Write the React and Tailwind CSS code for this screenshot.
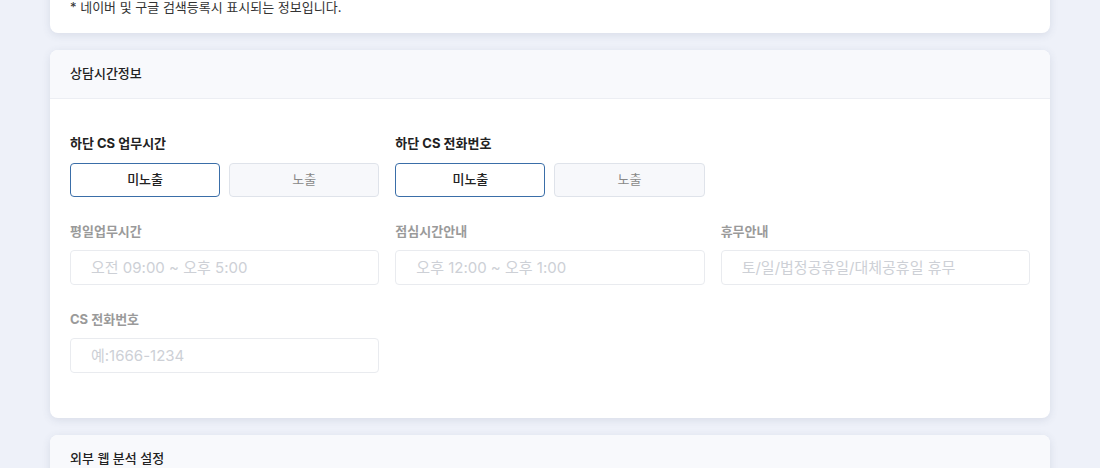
const font = { fontFamily: 'Inter, "Noto Sans CJK KR", sans-serif' };

const Toggle = ({ value }) => (
  <div className="grid grid-cols-2 gap-[9px]">
    {["미노출", "노출"].map((opt) => (
      <button
        key={opt}
        className={
          opt === value
            ? "h-[34px] rounded-[4px] border border-[#3a6ea8] bg-white text-[13px] font-medium text-[#222]"
            : "h-[34px] rounded-[4px] border border-[#dfe3ea] bg-[#f7f8fb] text-[13px] text-[#888]"
        }
      >
        {opt}
      </button>
    ))}
  </div>
);

const Field = ({ label, placeholder }) => (
  <div>
    <div className="text-[13px] font-bold leading-5 text-[#9a9a9a] mb-[9px]">{label}</div>
    <input
      disabled
      placeholder={placeholder}
      className="w-full h-[35px] rounded-[4px] border border-[#e9ebef] bg-white px-5 text-[15px] placeholder:text-[#cdd0d6] outline-none"
    />
  </div>
);

const Card = ({ title, children, className = "" }) => (
  <section className={`bg-white rounded-lg shadow-[0_2px_8px_rgba(60,70,110,0.12)] overflow-hidden ${className}`}>
    <div className="h-[49px] px-5 flex items-center bg-[#f8f9fc] border-b border-[#eceef3] text-[13px] font-medium text-[#222]">
      {title}
    </div>
    {children}
  </section>
);

export default function App() {
  return (
    <div className="min-h-screen bg-[#eef1f9] px-[50px] overflow-hidden" style={font}>
      <div className="w-[1000px] space-y-[17px]">
        <section className="-mt-[23px] pt-5 pb-4 px-5 bg-white rounded-b-lg shadow-[0_2px_8px_rgba(60,70,110,0.12)]">
          <p className="text-[13px] leading-5 text-[#333]">* 네이버 및 구글 검색등록시 표시되는 정보입니다.</p>
        </section>

        <Card title="상담시간정보">
          <div className="px-5 pt-[34px] pb-[45px] space-y-6">
            <div className="grid grid-cols-3 gap-4">
              <div>
                <div className="text-[13px] font-bold leading-5 text-[#222] mb-[10px]">하단 CS 업무시간</div>
                <Toggle value="미노출" />
              </div>
              <div>
                <div className="text-[13px] font-bold leading-5 text-[#222] mb-[10px]">하단 CS 전화번호</div>
                <Toggle value="미노출" />
              </div>
            </div>
            <div className="grid grid-cols-3 gap-4">
              <Field label="평일업무시간" placeholder="오전 09:00 ~ 오후 5:00" />
              <Field label="점심시간안내" placeholder="오후 12:00 ~ 오후 1:00" />
              <Field label="휴무안내" placeholder="토/일/법정공휴일/대체공휴일 휴무" />
            </div>
            <div className="grid grid-cols-3 gap-4">
              <Field label="CS 전화번호" placeholder="예:1666-1234" />
            </div>
          </div>
        </Card>

        <Card title="외부 웹 분석 설정">
          <div className="h-20" />
        </Card>
      </div>
    </div>
  );
}
